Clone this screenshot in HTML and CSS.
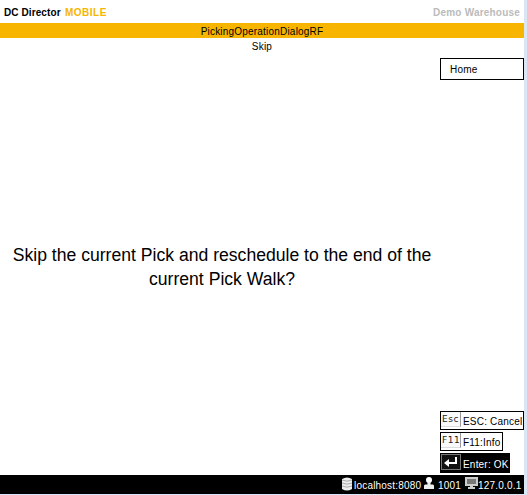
FILE: index.html
```html
<!DOCTYPE html>
<html lang="en">
<head>
<meta charset="utf-8">
<title>DC Director Mobile</title>
<link rel="stylesheet" href="styles.css">
</head>
<body>
<div class="screen">
  <header class="header">
    <div class="brand"><span class="brand-name">DC Director</span><span class="brand-mobile">MOBILE</span></div>
    <div class="warehouse">Demo Warehouse</div>
  </header>
  <div class="titlebar"><span>PickingOperationDialogRF</span></div>
  <main class="main">
    <section class="content">
      <div class="subtitle">Skip</div>
      <p class="message">Skip the current Pick and reschedule to the end of the<br>current Pick Walk?</p>
    </section>
    <nav class="side">
      <a class="home">Home</a>
      <div class="actions">
        <a class="action action-cancel"><span class="key">Esc</span><span class="label">ESC: Cancel</span></a>
        <a class="action action-info"><span class="key">F11</span><span class="label">F11:Info</span></a>
        <a class="action action-ok"><span class="key key-enter"><svg width="18" height="14" viewBox="0 0 18 14"><path d="M14 2v6H6" fill="none" stroke="#fff" stroke-width="2"/><path d="M2 8l5-4v8z" fill="#fff"/></svg></span><span class="label">Enter: OK</span></a>
      </div>
    </nav>
  </main>
  <footer class="footer">
    <svg class="icon-db" width="10" height="14" viewBox="0 0 10 14"><path d="M0 2v10q5 3 10 0V2q-5-3-10 0z" fill="#eee"/><path d="M0 3q5 2.4 10 0M0 6q5 2.4 10 0M0 9q5 2.4 10 0" fill="none" stroke="#999" stroke-width=".8"/></svg>
    <span class="host">localhost:8080</span>
    <svg class="icon-user" width="10" height="12" viewBox="0 0 10 12"><circle cx="5" cy="3" r="3" fill="#fff"/><path d="M3.500 5h3v2.500H9l1 1V12H0V8.500l1-1h2.500z" fill="#eee"/></svg>
    <span class="user">1001</span>
    <svg class="icon-pc" width="13" height="12" viewBox="0 0 13 12"><path d="M0 0h13v9H8v1h2v2H3v-2h2V9H0z" fill="#ccc"/><path d="M2 2h9v5H2z" fill="#777"/></svg>
    <span class="ip">127.0.0.1</span>
  </footer>
</div>
</body>
</html>
```

FILE: styles.css
```css
* { box-sizing: border-box; }
body {
  margin: 0;
  height: 495px;
  overflow: hidden;
  background: #d9e6f3;
  color: #000;
  font: 10px/15px "Liberation Sans", Arial, sans-serif;
  letter-spacing: 0.2px;
}
.screen {
  display: flex;
  flex-direction: column;
  width: 524px;
  height: 494px;
  background: #fff;
}
.header {
  display: flex;
  justify-content: space-between;
  flex: 0 0 23px;
  padding: 5px 4px 0;
  font-weight: bold;
}
.brand { display: flex; }
.brand-name { width: 61px; letter-spacing: 0.1px; }
.brand-mobile { color: #f7b500; letter-spacing: 0.5px; }
.warehouse { color: #bbb; }
.titlebar {
  flex: 0 0 15px;
  height: 15px;
  line-height: 17px;
  background: #f7b500;
  text-align: center;
}
.main { display: flex; flex: 1; }
.content { width: 440px; }
.subtitle {
  width: 524px;
  padding-top: 1px;
  text-align: center;
}
.message {
  width: 444px;
  margin: 189px 0 0;
  font-size: 17.6px;
  line-height: 24px;
  letter-spacing: 0;
  text-align: center;
  white-space: nowrap;
}
.side {
  display: flex;
  flex-direction: column;
  justify-content: space-between;
  width: 84px;
  padding: 20px 0 2px;
}
.home {
  height: 22px;
  padding: 3px 9px;
  border: 1px solid #000;
}
.actions {
  display: flex;
  flex-direction: column;
  align-items: flex-start;
  gap: 2px;
}
.action {
  display: flex;
  height: 19px;
  border: 1px solid #000;
  white-space: nowrap;
}
.action-cancel { width: 84px; }
.action-info { width: 63px; }
.action-ok { width: 70px; height: 20px; background: #000; color: #fff; }
.key {
  width: 20px;
  height: 15px;
  margin-right: 2px;
  padding-left: 1px;
  border-right: 1px solid #999;
  border-bottom: 1px solid #ddd;
  background: #fafafa;
  color: #222;
  font: 9px/15px "DejaVu Sans", sans-serif;
  letter-spacing: 0.5px;
}
.key-enter {
  height: 16px;
  padding: 0;
  border: 1px solid #777;
  background: #111;
}
.key-enter svg { display: block; }
.label { padding-top: 2px; }
.action-ok .label { padding-top: 3px; }
.footer {
  display: flex;
  flex: 0 0 19px;
  padding: 3px 2px 0 342px;
  background: #000;
  color: #fff;
  white-space: nowrap;
}
.footer svg { flex: none; margin-top: -1px; }
.host { width: 68px; margin: 0 2px 0 2px; }
.user { width: 23px; margin: 0 4px 0 4px; }
```
